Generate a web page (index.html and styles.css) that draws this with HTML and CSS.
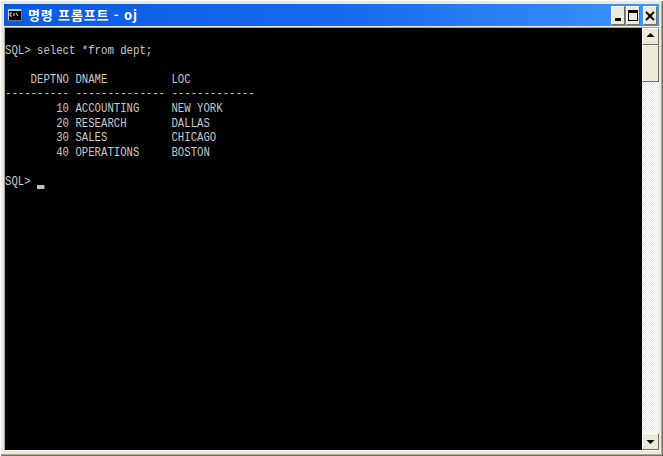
FILE: index.html
```html
<!DOCTYPE html>
<html lang="ko">
<head>
<meta charset="utf-8">
<title>명령 프롬프트 - oj</title>
<link rel="stylesheet" href="styles.css">
</head>
<body>
<div class="window">
  <div class="titlebar">
    <svg class="appicon" width="14" height="12" viewBox="0 0 14 12">
      <rect x="0" y="0" width="14" height="12" fill="#6a7590"/>
      <rect x="0" y="0" width="13" height="11" fill="#c8ccd8"/>
      <rect x="1" y="2" width="12" height="9" fill="#000"/>
      <path d="M4 4H2v3h2M6 4v3M8 4l2 3" stroke="#e0e0e0" stroke-width="1" fill="none"/>
    </svg>
    <span class="title">명령 프롬프트 - oj</span>
    <div class="controls">
      <div class="ctl"><svg width="14" height="19" viewBox="0 0 14 19"><rect x="4" y="12" width="6" height="3" fill="#000"/></svg></div>
      <div class="ctl"><svg width="14" height="19" viewBox="0 0 14 19"><path d="M2 4h10v11H2z M3 7v7h8V7z" fill="#000" fill-rule="evenodd"/></svg></div>
      <div class="ctl ctl-close"><svg width="14" height="19" viewBox="0 0 14 19"><path d="M3 6l8 8M11 6l-8 8" stroke="#000" stroke-width="2" fill="none"/></svg></div>
    </div>
  </div>
  <div class="client">
    <div class="screen">
<pre class="console">

SQL&gt; select *from dept;

    DEPTNO DNAME          LOC
---------- -------------- -------------
        10 ACCOUNTING     NEW YORK
        20 RESEARCH       DALLAS
        30 SALES          CHICAGO
        40 OPERATIONS     BOSTON

SQL&gt; <span class="cursor"></span></pre>
    </div>
    <div class="scrollbar">
      <div class="sbtn"><svg width="17" height="17" viewBox="0 0 17 17"><path d="M8.5 5l4 4h-8z" fill="#000"/></svg></div>
      <div class="thumb"></div>
      <div class="track"></div>
      <div class="sbtn"><svg width="17" height="17" viewBox="0 0 17 17"><path d="M4.5 7h8l-4 4z" fill="#000"/></svg></div>
    </div>
  </div>
</div>
</body>
</html>
```
FILE: styles.css
```css
html, body {
  margin: 0;
  padding: 0;
  background: #000;
}
.window {
  width: 663px;
  height: 456px;
  box-sizing: border-box;
  padding: 4px 4px 5px 4px;
  background: #ece9d8;
  box-shadow: inset 1px 1px 0 #fff, inset -1px -1px 0 #716f64, inset -2px -2px 0 #aca899;
  display: flex;
  flex-direction: column;
  overflow: hidden;
}
.titlebar {
  height: 22px;
  flex: none;
  background: linear-gradient(90deg, #0a5be0 0%, #1668ee 50%, #3d95ff 100%);
  display: flex;
  align-items: center;
  padding: 0 2px 0 4px;
  gap: 6px;
}
.appicon { flex: none; }
.title {
  color: #fff;
  font: bold 13px/17px "Noto Sans CJK KR", sans-serif;
  letter-spacing: 0.85px;
  white-space: pre;
  flex: 1;
  padding-bottom: 2px;
}
.controls {
  display: flex;
  gap: 1px;
}
.ctl {
  width: 14px;
  height: 19px;
  box-sizing: border-box;
  background: #ece9d8;
  border: 1px solid;
  border-color: #fff #716f64 #716f64 #fff;
  overflow: hidden;
}
.ctl svg { display: block; margin: -1px; }
.ctl-close { margin-left: 2px; }
.client {
  flex: 1;
  display: flex;
  min-height: 0;
  margin-top: 1px;
  border-top: 1px solid #aca899;
  border-left: 1px solid #aca899;
  border-bottom: 1px solid #fff;
}
.screen {
  flex: 1;
  background: #000;
  overflow: hidden;
  padding-top: 1px;
}
.console {
  margin: 0;
  color: #c8c8c8;
  font: 13px/14.6px "Liberation Mono", monospace;
  transform: scaleX(0.8205);
  transform-origin: 0 0;
}
.cursor {
  display: inline-block;
  width: 9px;
  height: 4px;
  background: #c0c0c0;
  vertical-align: -4px;
}
.scrollbar {
  width: 17px;
  flex: none;
  display: flex;
  flex-direction: column;
}
.sbtn, .thumb {
  box-sizing: border-box;
  background: #ece9d8;
  border: 1px solid;
  border-color: #fff #716f64 #716f64 #fff;
  flex: none;
}
.sbtn { height: 17px; overflow: hidden; }
.sbtn svg { display: block; margin: -1px; }
.thumb { height: 37px; }
.track {
  flex: 1;
  background: repeating-conic-gradient(#ece9d8 0 25%, #fff 0 50%) 0 0 / 2px 2px;
}
```
